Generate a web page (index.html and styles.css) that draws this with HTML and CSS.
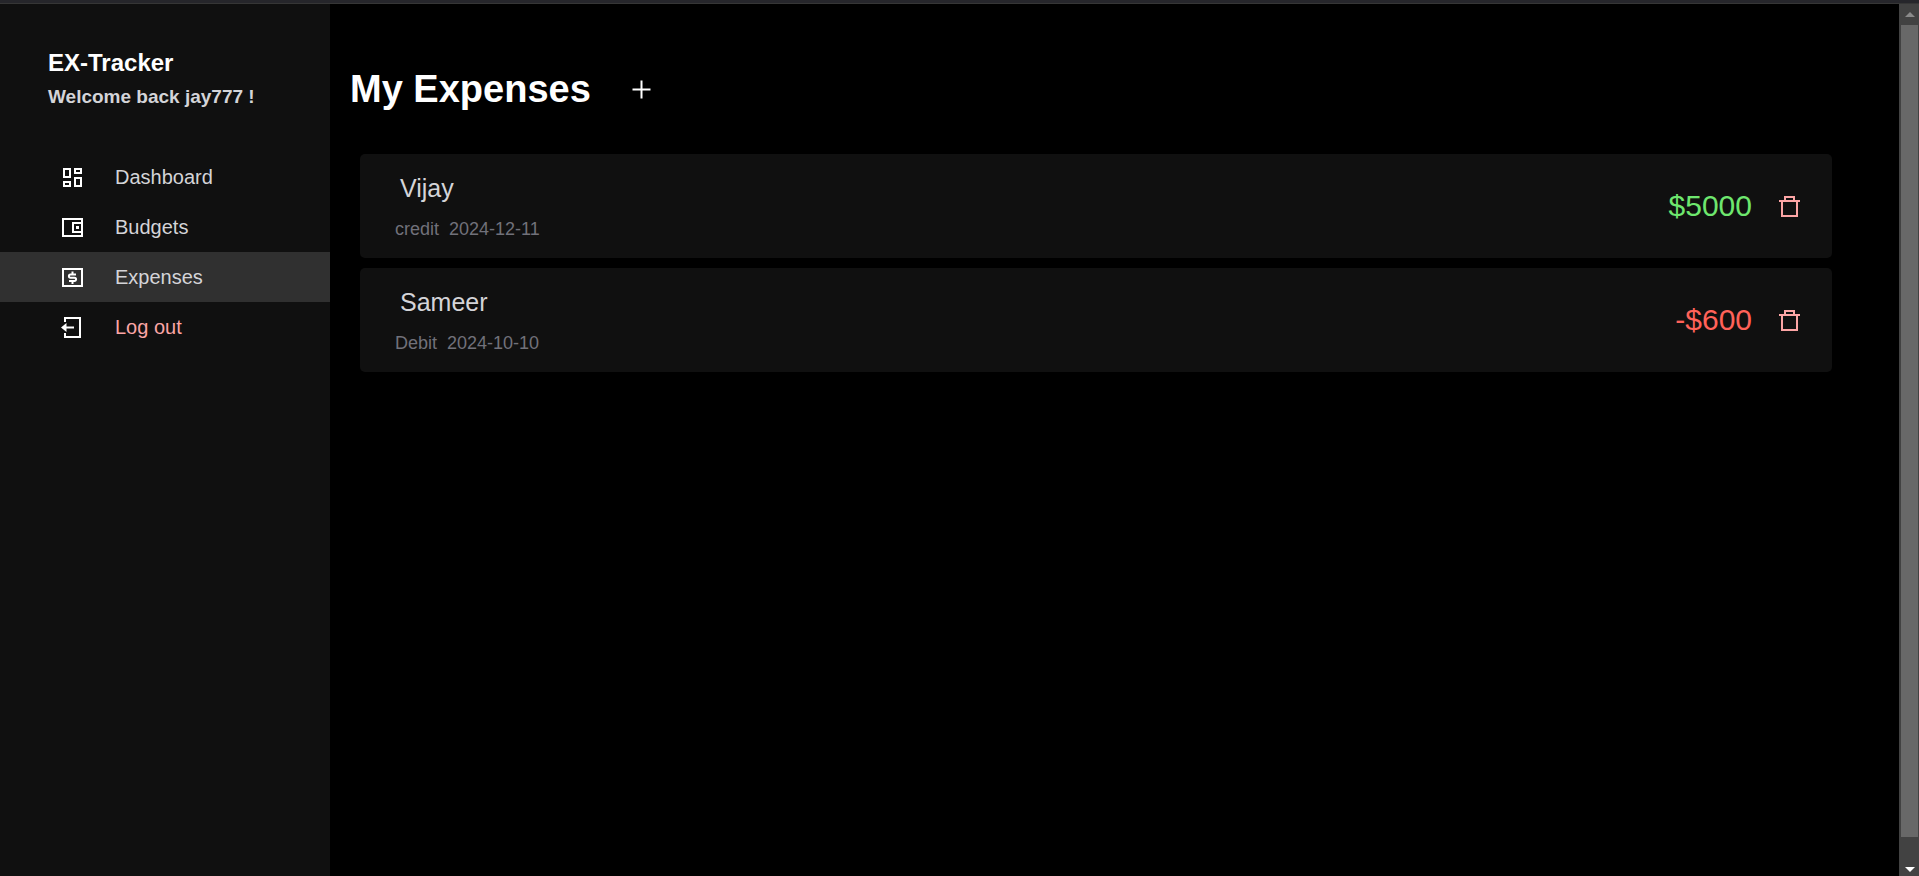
FILE: index.html
```html
<!DOCTYPE html>
<html lang="en">
<head>
<meta charset="utf-8">
<meta name="viewport" content="width=device-width, initial-scale=1">
<title>EX-Tracker</title>
<link rel="stylesheet" href="styles.css">
</head>
<body>
<div class="top-strip"></div>
<div class="app">
  <aside class="sidebar">
    <header class="brand">
      <h1 class="brand-name">EX-Tracker</h1>
      <p class="brand-welcome">Welcome back jay777 !</p>
    </header>
    <nav class="nav">
      <a class="nav-link" href="#dashboard">
        <svg class="icon" viewBox="0 0 25 25" aria-hidden="true"><path d="M4 4h6v8H4zM15 4h6v4h-6zM4 17h6v4H4zM15 13h6v8h-6z"/></svg>
        <span>Dashboard</span>
      </a>
      <a class="nav-link" href="#budgets">
        <svg class="icon" viewBox="0 0 25 25" aria-hidden="true"><path d="M3 4h19v17H3zM22 8h-9v9h9"/><path class="icon-solid" d="M16 11h3v3h-3z"/></svg>
        <span>Budgets</span>
      </a>
      <a class="nav-link nav-link-active" href="#expenses" aria-current="page">
        <svg class="icon" viewBox="0 0 25 25" aria-hidden="true"><path d="M3 4h19v17H3zM12.500 6.500v3M12.500 16v3"/><path d="M16 9.500h-5.500a1.500 1.500 0 0 0 0 3.200h4a1.500 1.500 0 0 1 0 3.200H9"/></svg>
        <span>Expenses</span>
      </a>
      <a class="nav-link nav-link-exit" href="#logout">
        <svg class="icon" viewBox="0 0 25 25" aria-hidden="true"><path d="M5 7V3h15v19H5v-4M5 12.500h9"/><path class="icon-solid" d="M1 12.500L6.500 8v9z"/></svg>
        <span>Log out</span>
      </a>
    </nav>
  </aside>
  <main class="main">
    <div class="heading">
      <h2 class="title">My Expenses</h2>
      <button class="icon-button" type="button" aria-label="Add expense">
        <svg class="icon" viewBox="0 0 25 25" aria-hidden="true"><path d="M12.500 3.500v18M3.500 12.500h18"/></svg>
      </button>
    </div>
    <ul class="expenses">
      <li class="expense">
        <div class="details">
          <h3 class="name">Vijay</h3>
          <p class="meta"><span>credit</span><time datetime="2024-12-11">2024-12-11</time></p>
        </div>
        <span class="amount amount-credit">$5000</span>
        <button class="icon-button delete" type="button" aria-label="Delete Vijay">
          <svg class="icon" viewBox="0 0 25 25" aria-hidden="true"><path d="M2 7h21M5 7v15h15V7M8 7V3h9v4"/></svg>
        </button>
      </li>
      <li class="expense">
        <div class="details">
          <h3 class="name">Sameer</h3>
          <p class="meta"><span>Debit</span><time datetime="2024-10-10">2024-10-10</time></p>
        </div>
        <span class="amount amount-debit">-$600</span>
        <button class="icon-button delete" type="button" aria-label="Delete Sameer">
          <svg class="icon" viewBox="0 0 25 25" aria-hidden="true"><path d="M2 7h21M5 7v15h15V7M8 7V3h9v4"/></svg>
        </button>
      </li>
    </ul>
  </main>
  <div class="scrollbar" aria-hidden="true">
    <svg class="scroll-arrow" viewBox="0 0 10 5"><path d="M0 5L5 0l5 5z"/></svg>
    <div class="scroll-thumb"></div>
    <svg class="scroll-arrow scroll-arrow-down" viewBox="0 0 10 5"><path d="M0 0h10L5 5z"/></svg>
  </div>
</div>
</body>
</html>
```
FILE: styles.css
```css
* {
  box-sizing: border-box;
  margin: 0;
  padding: 0;
}

body {
  display: flex;
  flex-direction: column;
  min-height: 100vh;
  background: #000;
  color: #d4d4d8;
  font-family: "Liberation Sans", Arial, sans-serif;
  font-size: 20px;
  line-height: 30px;
}

.top-strip {
  height: 4px;
  background: #26262b;
  border-bottom: 1px solid #363636;
}

.app {
  display: flex;
  flex: 1;
}

.sidebar {
  flex: 0 0 330px;
  background: #101010;
}

.brand {
  padding: 41px 48px 39px;
}

.brand-name {
  color: #fff;
  font-size: 24px;
  line-height: 36px;
}

.brand-welcome {
  font-size: 19px;
  font-weight: bold;
  line-height: 32px;
}

.nav-link {
  display: flex;
  align-items: center;
  gap: 30px;
  padding: 10px 60px;
  color: inherit;
  text-decoration: none;
}

.nav-link-active {
  background: #303030;
}

.nav-link-exit {
  color: #fca5a5;
}

.icon {
  display: block;
  width: 25px;
  height: 25px;
  fill: none;
  stroke: #fff;
  stroke-width: 2;
}

.icon-solid {
  fill: #fff;
  stroke: none;
}

.main {
  flex: 1;
  padding: 60px 20px;
}

.heading {
  display: flex;
  align-items: center;
  gap: 38px;
}

.title {
  color: #fff;
  font-size: 38px;
  line-height: 50px;
}

.icon-button {
  background: none;
  border: 0;
  cursor: pointer;
}

.expenses {
  display: flex;
  flex-direction: column;
  gap: 10px;
  margin: 40px 47px 0 10px;
  list-style: none;
}

.expense {
  display: flex;
  align-items: center;
  gap: 25px;
  padding: 14px 30px 14px 35px;
  background: #101010;
  border-radius: 5px;
}

.details {
  flex: 1;
}

.name {
  padding-left: 5px;
  font-size: 25px;
  font-weight: normal;
  line-height: 40px;
}

.meta {
  display: flex;
  gap: 10px;
  padding-top: 6px;
  color: #71717a;
  font-size: 18px;
}

.amount {
  font-size: 30px;
}

.amount-credit {
  color: #6ee76e;
}

.amount-debit {
  color: #ff6259;
}

.delete .icon {
  stroke: #fca5a5;
}

.scrollbar {
  display: flex;
  flex: 0 0 20px;
  flex-direction: column;
  align-items: center;
  gap: 8px;
  padding: 8px 1px 4px 2px;
  background: #424242;
}

.scroll-arrow {
  width: 10px;
  height: 5px;
  fill: #8a8a8a;
}

.scroll-arrow-down {
  fill: #fff;
}

.scroll-thumb {
  flex: 1;
  align-self: stretch;
  margin-bottom: 22px;
  background: #686868;
}
```
